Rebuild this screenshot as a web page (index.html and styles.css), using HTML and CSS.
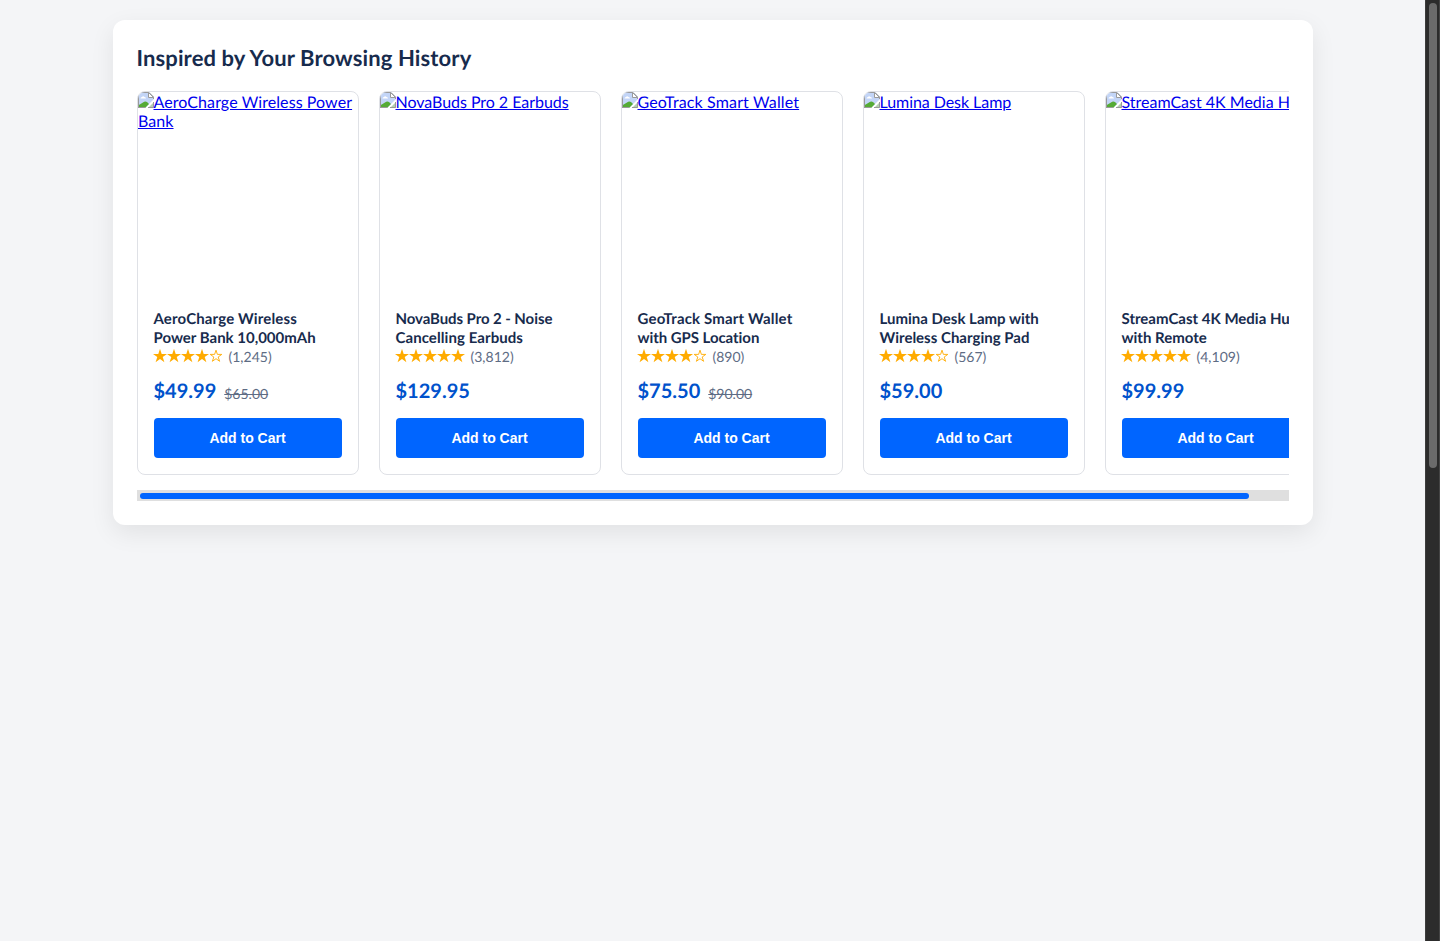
FILE: index.html
```html
<!DOCTYPE html>
<html lang="en">
<head>
<meta charset="utf-8">
<title>Inspired by Your Browsing History</title>
<link rel="stylesheet" href="styles.css">
</head>
<body>
<svg class="defs" width="0" height="0" aria-hidden="true">
  <symbol id="missing" viewBox="0 0 16 16">
    <path d="M0 0H11L16 5V7L7 16H0Z" fill="#c3d5f7"/>
    <path d="M0 16V13.500L5 10.500Q7 9 9 10L11 12L7 16Z" fill="#55ab35"/>
    <path d="M2.500 6.500Q2.500 5 4 5Q5 3.500 6.500 5Q8 5 8 6.500Z" fill="#fff"/>
    <path d="M.5 16V.5H11L15.500 5V7M0 15.500H7" fill="none" stroke="#9a9a9a"/>
    <path d="M10.500.5V5.500H15.500Z" fill="#fff" stroke="#9a9a9a"/>
    <path d="M16 10V16H10Z" fill="#b4cfb0"/>
    <path d="M15.500 10V15.500H10" fill="none" stroke="#9a9a9a"/>
  </symbol>
  <symbol id="star" viewBox="0 0 14 14">
    <path d="M7 -.2L8.700 4.900H14L9.700 8.100L11.400 13.300L7 10.100L2.600 13.300L4.300 8.100L0 4.900H5.300Z" fill="#ffab00"/>
  </symbol>
  <symbol id="star-empty" viewBox="0 0 14 14">
    <path d="M7 1.200L8.400 5.400H12.800L9.200 8L10.600 12.300L7 9.700L3.400 12.300L4.800 8L1.200 5.400H5.600Z" fill="none" stroke="#ffab00" stroke-width=".9"/>
  </symbol>
</svg>
<div class="viewport">
  <main class="page">
    <section class="widget">
      <h2 class="heading">Inspired by Your Browsing History</h2>
      <div class="carousel" id="carousel"></div>
      <div class="track"><div class="thumb"></div></div>
    </section>
  </main>
  <div class="page-scrollbar"><div class="page-thumb"></div></div>
</div>
<script src="script.js"></script>
</body>
</html>
```
FILE: styles.css
```css
* { box-sizing: border-box; }
body { margin: 0; background: #f4f5f7; color: #172b4d; font-family: Lato, sans-serif; font-size: 16px; text-rendering: geometricPrecision; font-variant-ligatures: none; }
.defs { display: none; }
.viewport { display: flex; height: 941px; overflow: hidden; }
.page { flex: 1; min-width: 0; padding: 20px 112px 0 113px; }
.widget { width: 1200px; height: 505px; padding: 24px; background: #fff; border-radius: 12px; box-shadow: 0 8px 24px rgba(0, 0, 0, .08); }
.heading { margin: 0 0 20px; font-size: 22px; line-height: 27px; font-weight: 700; text-indent: -.5px; letter-spacing: .12px; }
.carousel { display: flex; gap: 20px; height: 384px; overflow: hidden; }
.card { display: flex; flex-direction: column; flex: 0 0 222px; height: 384px; border: 1px solid #dfe1e6; border-radius: 8px; overflow: hidden; }
.photo { display: block; height: 200px; color: #0000ee; line-height: 19px; text-decoration: underline; }
.photo-icon { width: 16px; height: 16px; margin-right: -.5px; vertical-align: baseline; }
.info { display: flex; flex-direction: column; flex: 1; padding: 17px 16px 16px 15.5px; }
.name { margin: 0; height: 38px; padding-top: 1px; font-size: 15px; line-height: 19px; font-weight: 700; white-space: nowrap; }
.rating { display: flex; height: 19px; line-height: 19px; }
.stars { display: flex; width: 70px; margin: 0 5.5px 0 -.5px; padding-top: 2px; }
.star { width: 14px; height: 14px; overflow: visible; }
.count { font-size: 14px; color: #5e6c84; }
.price { display: flex; align-items: baseline; gap: 8px; margin-top: 13px; height: 24px; line-height: 24px; font-size: 20px; font-weight: 700; color: #0052cc; }
.old { position: relative; top: 1px; font-size: 14px; font-weight: 400; color: #5e6c84; text-decoration: line-through; }
.cart { margin: auto 0 0 .5px; height: 40px; padding: 0 1px 0 0; border: 0; border-radius: 4px; background: #0065ff; color: #fff; font: 700 14px "Liberation Sans", Arial, sans-serif; }
.card:nth-child(1) .photo { letter-spacing: .08px; }
.card:nth-child(1) .line1 { letter-spacing: .14px; }
.card:nth-child(2) .photo { letter-spacing: -.04px; }
.card:nth-child(2) .line1 { letter-spacing: -.08px; }
.card:nth-child(2) .line2 { letter-spacing: .07px; }
.card:nth-child(3) .photo { letter-spacing: .14px; }
.card:nth-child(3) .line1 { letter-spacing: .16px; }
.card:nth-child(3) .line2 { letter-spacing: -.06px; }
.card:nth-child(4) .photo { letter-spacing: -.06px; }
.track { height: 11px; margin-top: 15px; padding: 3px; background: #dfdfdf; }
.thumb { width: 1109px; height: 6px; border-radius: 3px; background: #0065ff; }
.page-scrollbar { width: 15px; padding: 3px 3px 0; background: #2c2c2c; border-left: 1px solid #3c3c3c; border-right: 1px solid #454545; }
.page-thumb { width: 8px; height: 465px; border-radius: 4px; background: #6b6b6b; }
```
FILE: script.js
```js
const products = [
  ["AeroCharge Wireless Power Bank", "AeroCharge Wireless", "Power Bank 10,000mAh", 4, "1,245", "$49.99", "$65.00"],
  ["NovaBuds Pro 2 Earbuds", "NovaBuds Pro 2 - Noise", "Cancelling Earbuds", 5, "3,812", "$129.95", ""],
  ["GeoTrack Smart Wallet", "GeoTrack Smart Wallet", "with GPS Location", 4, "890", "$75.50", "$90.00"],
  ["Lumina Desk Lamp", "Lumina Desk Lamp with", "Wireless Charging Pad", 4, "567", "$59.00", ""],
  ["StreamCast 4K Media Hub", "StreamCast 4K Media Hub", "with Remote", 5, "4,109", "$99.99", ""]
];
document.getElementById("carousel").innerHTML = products.map(([alt, line1, line2, rating, count, price, old]) => `
  <article class="card">
    <a class="photo" href="#"><svg class="photo-icon"><use href="#missing"/></svg>${alt}</a>
    <div class="info">
      <h3 class="name"><span class="line1">${line1}</span><br><span class="line2">${line2}</span></h3>
      <div class="rating"><span class="stars">${[1, 2, 3, 4, 5].map(n => `<svg class="star"><use href="#${n <= rating ? "star" : "star-empty"}"/></svg>`).join("")}</span><span class="count">(${count})</span></div>
      <div class="price"><span>${price}</span>${old ? `<span class="old">${old}</span>` : ""}</div>
      <button class="cart">Add to Cart</button>
    </div>
  </article>`).join("");
```
